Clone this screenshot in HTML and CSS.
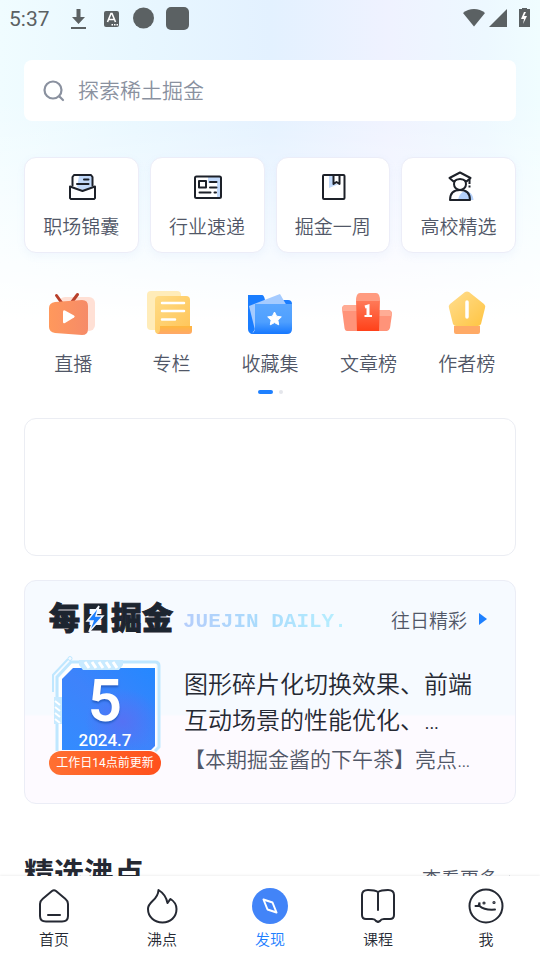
FILE: index.html
```html
<!DOCTYPE html>
<html lang="zh-CN">
<head>
  <meta charset="UTF-8">
  <meta name="viewport" content="width=device-width, initial-scale=1.0">
  <title>发现 - 稀土掘金</title>
  <link rel="stylesheet" href="styles.css">
</head>
<body>
  <div class="status">
    <span class="time">5:37</span>
    <svg class="status-left" width="112" height="24" viewBox="0 0 112 24" fill="#5b6163">
      <path d="M6.500 2h4v8h4.500l-6.500 7L2 10h4.500z"/>
      <path d="M1 20h15v2H1z"/>
      <rect x="34" y="4" width="15" height="16" rx="2"/>
      <path d="M37.500 15L41 6.500h1L45.500 15M39 12.500h5" fill="none" stroke="#fff" stroke-width="1.600"/>
      <path d="M41.500 17h1.500v1.500h-1.500zM44 17h1.500v1.500H44zM46.500 17H48v1.500h-1.500z" fill="#fff"/>
      <circle cx="73.500" cy="11" r="10.500"/>
      <rect x="96" y="0" width="23" height="23" rx="5"/>
    </svg>
    <svg class="status-right" width="68" height="22" viewBox="0 0 68 22" fill="#5b6163">
      <path d="M0 5C6-.5 16-.5 22 5L11 18.500z"/>
      <path d="M44 1v18H26z"/>
      <path d="M59 0h5v1h3v18H56V1h3z"/>
      <path d="M61 4l-3 7h3l-1 5 4-8h-3l2-4z" fill="#fff"/>
    </svg>
  </div>

  <div class="main">
    <label class="search">
      <svg width="24" height="24" viewBox="0 0 24 24" fill="none" stroke="#8a919f" stroke-width="2.200" stroke-linecap="round">
        <circle cx="11" cy="11" r="8.500"/>
        <path d="M17.500 17.500l3.500 3.500"/>
      </svg>
      <input type="text" placeholder="探索稀土掘金" aria-label="搜索">
    </label>

    <div class="cards">
      <a class="card" href="#">
        <svg width="32" height="32" viewBox="0 0 32 32" fill="none" stroke="#1d2129" stroke-width="2" stroke-linejoin="round" stroke-linecap="round">
          <path d="M14 5h13v11l-8 4-7-4z" fill="#c2dafb" stroke="none"/>
          <path d="M7.500 14.500V6l1.500-2h17l1.500 2v8.500M19 8.500h4.500M12 13h11.500"/>
          <path d="M5 15.500L17.500 20 30 15.500V27l-1 1H6l-1-1z" fill="#fff"/>
        </svg>
        <span>职场锦囊</span>
      </a>
      <a class="card" href="#">
        <svg width="32" height="32" viewBox="0 0 32 32" fill="none" stroke="#1d2129" stroke-width="2" stroke-linejoin="round" stroke-linecap="round">
          <path d="M17 6h12v20h-3V12h-9z" fill="#c2dafb" stroke="none"/>
          <rect x="4" y="5.500" width="26" height="21.500" rx="1.500"/>
          <rect x="8" y="10" width="7" height="6.500"/>
          <path d="M19 11h6.500M19 16.500h6.500M8.500 21.500h11M23.500 21.500h1.500"/>
        </svg>
        <span>行业速递</span>
      </a>
      <a class="card" href="#">
        <svg width="32" height="32" viewBox="0 0 32 32" fill="none" stroke="#1d2129" stroke-width="2" stroke-linejoin="round">
          <path d="M12 5h5v8h5l-10 4z" fill="#c2dafb" stroke="none"/>
          <rect x="6" y="4" width="21.500" height="24" rx="1"/>
          <path d="M16.500 4v9l3-2 3 2V4"/>
        </svg>
        <span>掘金一周</span>
      </a>
      <a class="card" href="#">
        <svg width="32" height="32" viewBox="0 0 32 32" fill="none" stroke="#1d2129" stroke-width="2" stroke-linejoin="round">
          <path d="M15 29c1-6 5-9 8-9s7 3 7.500 9z" fill="#b5d1fb" stroke="none"/>
          <path d="M7 29c0-6 3-10 10-10s10 4 10 10z"/>
          <circle cx="17" cy="13" r="6" fill="#fff"/>
          <path d="M6.500 7l10.500-5.500L27.500 7l-4 3.500c-4-3-9-3-13 0z" fill="#fff"/>
          <path d="M26.500 8v5M26.500 14.500v2"/>
        </svg>
        <span>高校精选</span>
      </a>
    </div>

    <div class="features">
      <a class="feature" href="#">
        <svg width="52" height="48" viewBox="0 0 52 48">
          <defs>
            <linearGradient id="tv" x1="0" y1="0" x2="1" y2="0"><stop offset="0" stop-color="#ff985c"/><stop offset="1" stop-color="#f68b68"/></linearGradient>
          </defs>
          <rect x="12" y="7" width="36" height="34" rx="6" fill="#ffe0d5"/>
          <path d="M9.500 5.500l5 7M30.500 4.500l-6 8" stroke="#b8402b" stroke-width="3" stroke-linecap="round"/>
          <path d="M8 12l27-2q6 0 6 6v23q0 6-6 6L8 43q-6-1-6-6V18q0-5 6-6z" fill="url(#tv)"/>
          <path d="M16 22v10q0 2 2 1l9-5.500q1.500-1 0-2L18 20.500q-2-1-2 1.500z" fill="#fff"/>
        </svg>
        <span>直播</span>
      </a>
      <a class="feature" href="#">
        <svg width="52" height="48" viewBox="0 0 52 48">
          <defs>
            <linearGradient id="paper" x1="0" y1="0" x2="1" y2="1"><stop offset="0" stop-color="#ffdb84"/><stop offset="1" stop-color="#ffc457"/></linearGradient>
            <linearGradient id="roll" x1="0" y1="0" x2="0" y2="1"><stop offset="0" stop-color="#ffb83e"/><stop offset="1" stop-color="#ffa86a"/></linearGradient>
          </defs>
          <path d="M5 1h26q4 0 4 4v35H5q-4 0-4-4V5q0-4 4-4z" fill="#ffecb9"/>
          <path d="M13 6h27q4 0 4 4v31l-4 3H13q-4 0-4-4V10q0-4 4-4z" fill="url(#paper)"/>
          <path d="M16 13h22M16 21h22M16 29.500h13" stroke="#fff" stroke-width="2.500" stroke-linecap="round"/>
          <path d="M14 36h32v5q0 3-3 3H11q3-1 3-5z" fill="url(#roll)"/>
        </svg>
        <span>专栏</span>
      </a>
      <a class="feature" href="#">
        <svg width="52" height="48" viewBox="0 0 52 48">
          <defs>
            <linearGradient id="folder" x1="0" y1="0" x2="0" y2="1"><stop offset="0" stop-color="#5ba7ff"/><stop offset=".6" stop-color="#4e9fff"/><stop offset="1" stop-color="#1678ff"/></linearGradient>
          </defs>
          <path d="M4 5h14q2 0 3 5h23q4 0 4 4v22H13l-5 8q-4-1-4-5z" fill="#1a7dff"/>
          <path d="M5 16L36 4l7 12v24H11z" fill="#a5cbff"/>
          <path d="M11 14h37v25q0 5-5 5H6q5-1 5-6z" fill="url(#folder)"/>
          <path d="M30.500 22l2.100 4.200 4.700.7-3.400 3.300.8 4.600-4.200-2.200-4.200 2.200.8-4.600-3.400-3.300 4.700-.7z" fill="#fff" stroke="#fff" stroke-linejoin="round"/>
        </svg>
        <span>收藏集</span>
      </a>
      <a class="feature" href="#">
        <svg width="52" height="48" viewBox="0 0 52 48">
          <defs>
            <linearGradient id="podium" x1="0" y1="0" x2="0" y2="1"><stop offset="0" stop-color="#ff7b5a"/><stop offset="1" stop-color="#ff4119"/></linearGradient>
          </defs>
          <path d="M4 15h14v26H5q-2 0-2.500-3L0 19q0-4 4-4z" fill="#ff9379"/>
          <path d="M3 15h12v6H0q0-6 3-6z" fill="#ffac95"/>
          <path d="M34 20h12q4 0 4 4l-2 14q-1 3-3 3H34z" fill="#ff9379"/>
          <path d="M36 20h10q4 0 4 6H36z" fill="#ffac95"/>
          <path d="M14 10h24l-1 31H15z" fill="url(#podium)"/>
          <path d="M18 3h16q4 0 4 8H14q0-8 4-8z" fill="#ff9b80"/>
          <path d="M22 17l3-1V26" fill="none" stroke="#fff" stroke-width="3" transform="translate(1)"/>
          <path d="M22.500 26h7.500" stroke="#fff" stroke-width="2"/>
        </svg>
        <span>文章榜</span>
      </a>
      <a class="feature" href="#">
        <svg width="52" height="48" viewBox="0 0 52 48">
          <defs>
            <linearGradient id="pen" x1="0" y1="0" x2="1" y2="1"><stop offset="0" stop-color="#ffde91"/><stop offset="1" stop-color="#ffc441"/></linearGradient>
          </defs>
          <path d="M24 2q2-1 4 0l15 12q2 2 1 4l-4 16q-1 2-3 2H15q-2 0-3-2L8 18q-1-2 1-4z" fill="url(#pen)"/>
          <path d="M26 12v15" stroke="#fff" stroke-width="3.500" stroke-linecap="round"/>
          <path d="M13 36h26v6q0 2-2 2H15q-2 0-2-2z" fill="#ffaa66"/>
        </svg>
        <span>作者榜</span>
      </a>
    </div>
    <div class="dots"><i class="current"></i><i></i></div>

    <div class="banner"></div>

    <div class="daily">
      <div class="daily-head">
        <h2 class="logo">每日掘金
          <svg width="20" height="28" viewBox="0 0 20 28"><path d="M14 1L2 16h6L4 27l14-16h-7z" fill="#1e80ff" stroke="#f7faff" stroke-width="1.500"/></svg>
        </h2>
        <span class="slogan">JUEJIN DAILY.</span>
        <a class="past" href="#">往日精彩
          <svg width="8" height="12" viewBox="0 0 8 12"><path d="M0 0l8 6-8 6z" fill="#1e80ff"/></svg>
        </a>
      </div>
      <div class="daily-body">
        <div class="calendar">
          <svg class="frame" width="112" height="100" viewBox="0 0 112 100" fill="none">
            <defs>
              <linearGradient id="cal" x1="0" y1="1" x2="1" y2="0"><stop offset="0" stop-color="#328cff"/><stop offset=".5" stop-color="#3e83fb"/><stop offset="1" stop-color="#2488ff"/></linearGradient>
              <radialGradient id="glow" cx=".65" cy=".65" r=".4"><stop offset="0" stop-color="#5572f4"/><stop offset="1" stop-color="#5572f4" stop-opacity="0"/></radialGradient>
            </defs>
            <path d="M10 94V22L23 7h84v87z" fill="#fff"/>
            <path d="M8 95V21L22 6h84q4 0 4 4v81l-4 4" stroke="#bfe7ff" stroke-width="3"/>
            <path d="M13 94V23l11-11h82v78l-4 4z" fill="url(#cal)"/>
            <path d="M13 94V23l11-11h82v78l-4 4z" fill="url(#glow)"/>
            <path d="M4 36V19L19 3" stroke="#bfe7ff" stroke-width="2"/>
            <circle cx="21" cy="2.500" r="2" stroke="#bfe7ff"/>
            <path d="M30 4h44v5l-4 5H34l-4-5z" fill="#c8eaff"/>
            <path d="M36 6l4 6M43 6l4 6M50 6l4 6M57 6l4 6M64 6l4 6" stroke="#fff" stroke-width="3"/>
            <path d="M5 41h8v27H5z" fill="#c8eaff"/>
            <path d="M6 45l5 4M6 51l5 4M6 57l5 4M6 63l5 4" stroke="#fff" stroke-width="2"/>
          </svg>
          <div class="day">5</div>
          <div class="month">2024.7</div>
          <div class="update">工作日14点前更新</div>
        </div>
        <div class="article">
          <h3>图形碎片化切换效果、前端互动场景的性能优化、…</h3>
          <p>【本期掘金酱的下午茶】亮点…</p>
        </div>
      </div>
    </div>

    <div class="section-head">
      <h2>精选沸点</h2>
      <a href="#">查看更多
        <svg width="8" height="10" viewBox="0 0 8 10" fill="none" stroke="#8a919f" stroke-width="1.500"><path d="M1 1l4 4-4 4"/></svg>
      </a>
    </div>
  </div>

  <nav class="tabs">
    <a href="#">
      <svg width="36" height="36" viewBox="0 0 36 36" fill="none" stroke="#252933" stroke-width="2" stroke-linejoin="round" stroke-linecap="round">
        <path d="M16 3q2-1.500 4 0l9.500 8q2.500 2 2.500 5v12q0 5.500-6 5.500H10q-6 0-6-5.500V16q0-3 2.500-5z"/>
        <path d="M12 27h12"/>
      </svg>
      <span>首页</span>
    </a>
    <a href="#">
      <svg width="36" height="36" viewBox="0 0 36 36" fill="none" stroke="#252933" stroke-width="2" stroke-linejoin="round" stroke-linecap="round">
        <path d="M14.500 2c5 3 8 8 9 13 1-1 2-3 3-4 4 2.500 6 6.500 6 10 0 8-6 13.500-14 13.500S4 29 4 21c0-8 10-8 10.500-19z"/>
      </svg>
      <span>沸点</span>
    </a>
    <a class="current" href="#">
      <svg width="36" height="36" viewBox="0 0 36 36" fill="none" stroke="#fff" stroke-width="2" stroke-linejoin="round">
        <circle cx="18" cy="18" r="18" fill="#4284f8" stroke="none"/>
        <path d="M11.500 11.500l9 3 4 10-9-3z"/>
      </svg>
      <span>发现</span>
    </a>
    <a href="#">
      <svg width="36" height="36" viewBox="0 0 36 36" fill="none" stroke="#252933" stroke-width="2" stroke-linejoin="round" stroke-linecap="round">
        <path d="M18 4Q15 2 8 2 2 2 2 7v20q0 4 4 4h6q3 0 4 2l2 1 2-1q1-2 4-2h6q4 0 4-4V7q0-5-6-5-7 0-10 2zM18 4v18"/>
      </svg>
      <span>课程</span>
    </a>
    <a href="#">
      <svg width="36" height="36" viewBox="0 0 36 36" fill="none" stroke="#252933" stroke-width="2" stroke-linecap="round">
        <circle cx="18" cy="18" r="16.500"/>
        <path d="M7.500 18h3l1-3.500v3.500c4 3.500 9 4 15.500 3.500"/>
        <circle cx="16" cy="15" r=".6"/>
        <circle cx="26" cy="14.500" r=".6"/>
      </svg>
      <span>我</span>
    </a>
  </nav>
</body>
</html>
```
FILE: styles.css
```css
* {
  margin: 0;
  padding: 0;
  box-sizing: border-box;
}
body {
  display: flex;
  flex-direction: column;
  height: 100vh;
  font-family: Roboto, "Noto Sans CJK SC", sans-serif;
  font-weight: 350;
  font-size: 19px;
  color: #515767;
  background:
    linear-gradient(to bottom, rgba(255,255,255,0) 100px, #fff 320px),
    linear-gradient(to right, #f0fcff 0%, #e8f7ff 25%, #e3f1ff 50%, #eff2ff 72%, #edf8ff 90%, #f0fdff 100%);
}
a {
  color: inherit;
  text-decoration: none;
}
svg {
  display: block;
  flex: none;
  overflow: visible;
}
.status {
  display: flex;
  align-items: center;
  height: 38px;
  padding: 0 9px;
}
.time {
  width: 61px;
  font-size: 21px;
  font-weight: 400;
  color: #5b6163;
}
.status-right {
  margin-left: auto;
}
.main {
  flex: 1;
  min-height: 0;
  padding: 22px 24px 0;
  overflow-y: auto;
  scrollbar-width: none;
}
.search {
  display: flex;
  align-items: center;
  gap: 12px;
  height: 61px;
  padding: 0 18px;
  border-radius: 8px;
  background-color: #fff;
}
.search input {
  flex: 1;
  min-width: 0;
  border: none;
  outline: none;
  background: none;
  font: inherit;
  font-size: 21px;
}
.search input::placeholder {
  color: #8a919f;
}
.cards {
  display: grid;
  grid-template-columns: repeat(4, 1fr);
  gap: 11px;
  margin-top: 36px;
}
.card {
  display: flex;
  flex-direction: column;
  align-items: center;
  gap: 11px;
  padding: 13px 0 10px;
  border: 1px solid #ecedf8;
  border-radius: 12px;
  background-color: #fff;
  box-shadow: 0 3px 8px rgba(120, 150, 230, .07);
  line-height: 28px;
}
.features {
  display: grid;
  grid-template-columns: repeat(5, 1fr);
  margin-top: 37px;
}
.feature {
  display: flex;
  flex-direction: column;
  align-items: center;
  gap: 13px;
  line-height: 28px;
}
.dots {
  display: flex;
  justify-content: center;
  gap: 6px;
  margin-top: 11px;
}
.dots i {
  width: 4px;
  height: 4px;
  border-radius: 2px;
  background-color: #e4e6eb;
}
.dots .current {
  width: 15px;
  background-color: #1e80ff;
}
.banner {
  height: 138px;
  margin-top: 24px;
  border: 1px solid #ebedf3;
  border-radius: 12px;
}
.daily {
  margin-top: 24px;
  padding: 20px 24px 28px;
  border: 1px solid #ebedf6;
  border-radius: 12px;
  background: linear-gradient(to bottom, #f6faff 60%, #fdfaff 61%);
}
.daily-head {
  display: flex;
  align-items: center;
  height: 36px;
}
.logo {
  position: relative;
  font-size: 31px;
  font-weight: 900;
  line-height: 36px;
  color: #1d2530;
  -webkit-text-stroke: 1px #1d2530;
}
.logo svg {
  position: absolute;
  top: 4px;
  left: 36px;
}
.slogan {
  margin-left: 10px;
  padding-top: 4px;
  font: bold 21px "Liberation Mono", monospace;
  color: transparent;
  background: linear-gradient(to right, #b5cdfb, #a9dcfc 50%, #b8f0ff);
  -webkit-background-clip: text;
  background-clip: text;
}
.past {
  display: flex;
  align-items: center;
  gap: 12px;
  margin-left: auto;
  padding-right: 4px;
}
.daily-body {
  display: flex;
  gap: 23px;
  margin-top: 19px;
}
.calendar {
  position: relative;
  width: 112px;
  padding-top: 15px;
  text-align: center;
  color: #fff;
}
.frame {
  position: absolute;
  top: 0;
  left: 0;
}
.day,
.month,
.update {
  position: relative;
}
.day {
  font-size: 60px;
  font-weight: 600;
  line-height: 60px;
  text-shadow: 0 2px 2px #2860c8;
}
.month {
  font-size: 17px;
  font-weight: 500;
  line-height: 19px;
}
.update {
  margin-top: 1px;
  border-radius: 12px;
  background: linear-gradient(to right, #ff7032, #ff501c);
  font-size: 12px;
  font-weight: 400;
  line-height: 24px;
  white-space: nowrap;
}
.article {
  flex: 1;
  min-width: 0;
  padding-top: 11px;
}
.article h3 {
  font-size: 24px;
  font-weight: 350;
  line-height: 36px;
  color: #252933;
}
.article p {
  margin-top: 6px;
  font-size: 21px;
  line-height: 30px;
  white-space: nowrap;
}
.section-head {
  display: flex;
  align-items: flex-end;
  justify-content: space-between;
  margin-top: 48px;
  line-height: 44px;
}
.section-head h2 {
  font-size: 30px;
  font-weight: 700;
  color: #252933;
}
.section-head a {
  display: flex;
  align-items: center;
  gap: 10px;
  line-height: 32px;
}
.tabs {
  display: grid;
  grid-template-columns: repeat(5, 1fr);
  padding: 12px 0 8px;
  background-color: #fff;
  box-shadow: 0 -1px 2px rgba(0, 0, 0, .06);
  z-index: 1;
}
.tabs a {
  display: flex;
  flex-direction: column;
  align-items: center;
  gap: 4px;
  font-size: 15px;
  line-height: 24px;
  color: #252933;
}
.tabs .current {
  color: #1e80ff;
}
```
